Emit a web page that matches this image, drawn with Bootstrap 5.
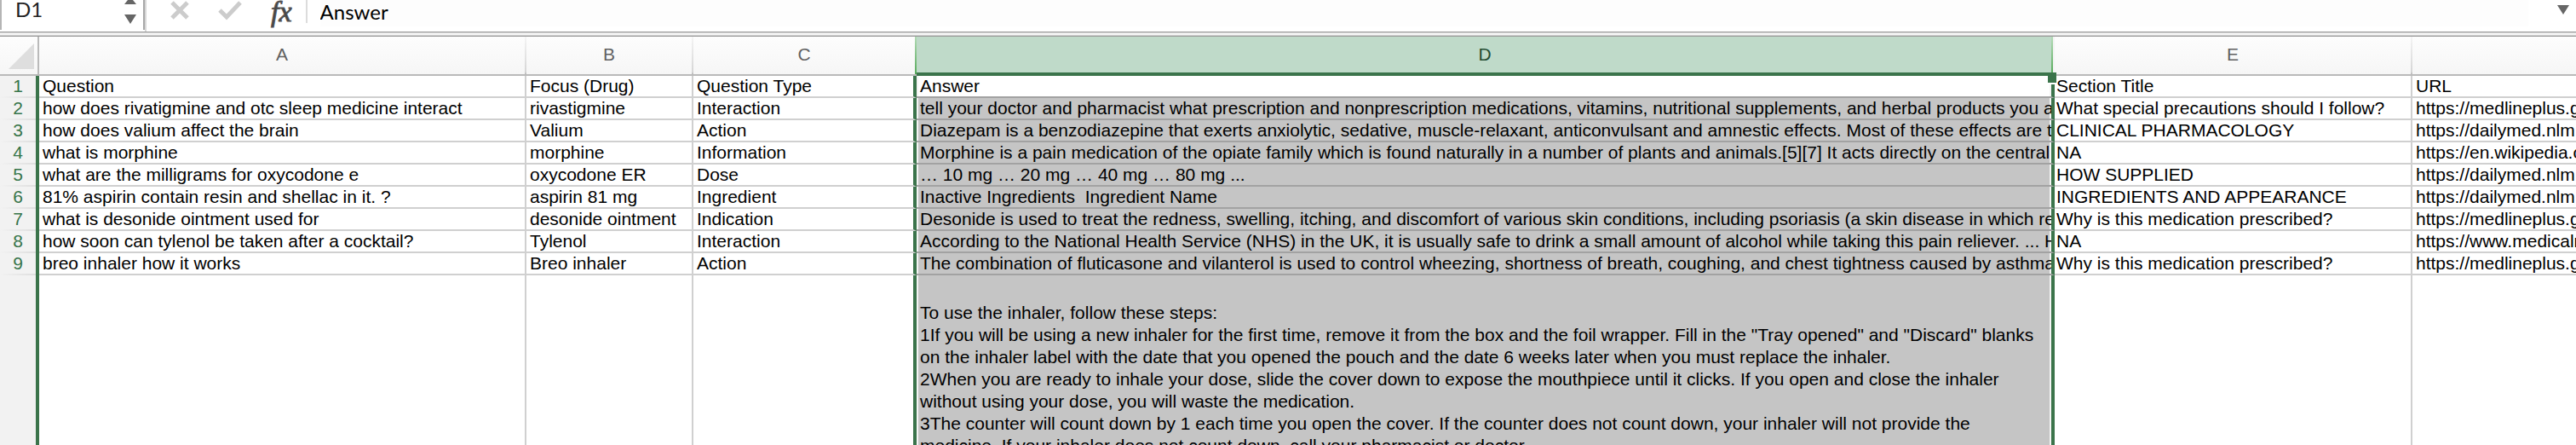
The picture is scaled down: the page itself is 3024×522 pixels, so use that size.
<!DOCTYPE html>
<html lang="en">
<head>
<meta charset="utf-8">
<meta name="viewport" content="width=device-width, initial-scale=1">
<title>Drug questions</title>
<link href="https://cdn.jsdelivr.net/npm/bootstrap@5.3.0/dist/css/bootstrap.min.css" rel="stylesheet">
<script src="https://cdn.jsdelivr.net/npm/bootstrap@5.3.0/dist/js/bootstrap.bundle.min.js" defer></script>
<style>
  body { font-family: "Liberation Sans", Arial, sans-serif; font-size: 21px; line-height: 24px; color: #000; background: #fff; overflow: hidden; }
  .formula-bar { height: 37px; font-family: Lato, sans-serif; }
  .formula-bar input, .formula-bar button { border: 0; padding: 0; background: transparent; color: #000; }
  .formula-bar input { font-size: 24px; outline: 0; }
  .formula-bar svg { display: block; }
  .formula-bar .name-box { width: 170px; height: 35px; border-left: 2px solid #b5b5b5; border-right: 2px solid #a8a8a8; padding-right: 8px; }
  .formula-bar .name-box input { width: 100px; height: 20px; line-height: 20px; padding-left: 16px; color: #222; }
  .bar-edge { width: 2px; background: #d8d8d8; }
  .tools { padding-left: 28px; gap: 34px; }
  .formula-bar .fx-sign { font: italic 34px/27px "Liberation Serif", serif; color: #444; height: 27px; -webkit-text-stroke: 1px #555; }
  .bar-rule { width: 2px; height: 27px; background: #dcdcdc; margin-left: 16px; }
  .formula-bar .entry { height: 31px; padding: 0 0 5px 0; margin-left: 15px; line-height: 26px; background: #fdfdfd; min-width: 0; }
  .formula-bar .expand { padding: 6px 8px 0 34px; }
  .splitter { height: 6px; border-top: 1px solid #999; border-bottom: 1px solid #999; background: linear-gradient(#d8d8d8 1px, #f6f6f6 1px, #f6f6f6 3px, #d0d0d0 3px); }
  .sheet { table-layout: fixed; width: 100%; border-collapse: separate; border-spacing: 0; }
  .sheet col.c-num { width: 46px; } .sheet col.c-a { width: 572px; } .sheet col.c-b { width: 196px; }
  .sheet col.c-c { width: 262px; } .sheet col.c-d { width: 1336px; } .sheet col.c-e { width: 420px; }
  .sheet th, .sheet td { padding: 0 0 0 4px; border: 0 solid #d0d0d0; border-width: 0 2px 2px 0; height: 26px; overflow: hidden; white-space: pre; vertical-align: top; font-weight: 400; }
  .sheet thead th { height: 44px; padding: 0; line-height: 42px; color: #616161; text-align: center; background: linear-gradient(#fdfdfd, #f6f6f6); border-image: linear-gradient(#f6f6f6, #d6d6d6 90%, #bababa 96%) 2; }
  .sheet thead th.corner { border-image: none; border-color: #bababa; }
  .sheet thead th.corner svg { display: block; margin: 8px 0 0 10px; }
  .sheet thead th.before { border-image: linear-gradient(#b5dcb8, #58ab5c 95%, #bababa 96%) 2; }
  .sheet thead th.picked { background: #bfdac9 linear-gradient(#b5dcb8, #58ab5c) right / 2px 100% no-repeat; color: #254d33; border-image: none; border-right: 2px solid #f4f4f4; border-bottom: 4px solid #3b744b; }
  .sheet tbody th { padding: 0; text-align: center; color: #37754a; background: linear-gradient(90deg, #f2f2f2, #dedede) bottom / 100% 2px no-repeat, #f2f2f2; border-right: 4px solid #3b744b; border-bottom: 0; }
  .sheet tbody td:nth-child(4) { border-right: 4px solid #3b744b; }
  .sheet tbody td:nth-child(5) { background: #c5c5c5; border-bottom-color: #a2a2a2; border-right: 4px solid #3b744b; box-shadow: inset 2px 0 #f4f4f4, inset -2px 0 #f4f4f4; }
  .sheet tbody tr:first-child td:nth-child(5) { background: #fff; }
  .sheet tbody td:nth-child(6) { padding-left: 2px; }
  .sheet tbody .tall > * { padding-top: 31px; line-height: 26px; }
  .sheet tr > :last-child { border-right-width: 0; }
  .handle-cell { position: relative; }
  .sheet tbody td.handle-cell { overflow: visible; }
  .fill-handle { position: absolute; right: -6px; top: -4px; width: 10px; height: 14px; background: #3b744b; border-bottom: 2px solid #fff; z-index: 1; }
</style>
</head>
<body>
<div class="formula-bar d-flex align-items-start">
  <div class="name-box d-flex align-items-start justify-content-between flex-shrink-0">
    <input aria-label="Cell name" value="D1">
    <button aria-label="Choose a cell"><svg width="14" height="29" viewBox="0 0 14 29"><path d="M0 5L4 0H10L14 5ZM0 17H14L7 28Z" fill="#666"/></svg></button>
  </div>
  <div class="bar-edge align-self-stretch"></div>
  <div class="tools d-flex align-items-start flex-shrink-0">
    <button aria-label="Cancel"><svg width="22" height="25" viewBox="0 0 22 25"><path d="M2 3L20 21M20 3L2 21" stroke="#ccc" stroke-width="5"/></svg></button>
    <button aria-label="Enter"><svg width="28" height="25" viewBox="0 0 28 25"><path d="M2 12L10 20L26 3" fill="none" stroke="#ccc" stroke-width="5"/></svg></button>
    <button class="fx-sign" aria-label="Insert function">fx</button>
  </div>
  <div class="bar-rule"></div>
  <input class="entry flex-grow-1" aria-label="Formula" value="Answer">
  <button class="expand" aria-label="Expand formula bar"><svg width="14" height="12" viewBox="0 0 14 12"><path d="M0 0H14L7 11Z" fill="#666"/></svg></button>
</div>
<div class="splitter"></div>
<table class="sheet">
<colgroup><col class="c-num"><col class="c-a"><col class="c-b"><col class="c-c"><col class="c-d"><col class="c-e"><col></colgroup>
<thead>
<tr><th class="corner"><svg width="30" height="30" viewBox="0 0 30 30"><path d="M30 0V30H0Z" fill="#dedede"/></svg></th><th>A</th><th>B</th><th class="before">C</th><th class="picked">D</th><th>E</th><th></th></tr>
</thead>
<tbody>
<tr><th>1</th><td>Question</td><td>Focus (Drug)</td><td>Question Type</td><td class="handle-cell">Answer<span class="fill-handle"></span></td><td>Section Title</td><td>URL</td></tr>
<tr><th>2</th><td>how does rivatigmine and otc sleep medicine interact</td><td>rivastigmine</td><td>Interaction</td><td>tell your doctor and pharmacist what prescription and nonprescription medications, vitamins, nutritional supplements, and herbal products you ar</td><td>What special precautions should I follow?</td><td>https://medlineplus.g</td></tr>
<tr><th>3</th><td>how does valium affect the brain</td><td>Valium</td><td>Action</td><td>Diazepam is a benzodiazepine that exerts anxiolytic, sedative, muscle-relaxant, anticonvulsant and amnestic effects. Most of these effects are th</td><td>CLINICAL PHARMACOLOGY</td><td>https://dailymed.nlm.</td></tr>
<tr><th>4</th><td>what is morphine</td><td>morphine</td><td>Information</td><td>Morphine is a pain medication of the opiate family which is found naturally in a number of plants and animals.[5][7] It acts directly on the central</td><td>NA</td><td>https://en.wikipedia.o</td></tr>
<tr><th>5</th><td>what are the milligrams for oxycodone e</td><td>oxycodone ER</td><td>Dose</td><td>… 10 mg … 20 mg … 40 mg … 80 mg ...</td><td>HOW SUPPLIED</td><td>https://dailymed.nlm.</td></tr>
<tr><th>6</th><td>81% aspirin contain resin and shellac in it. ?</td><td>aspirin 81 mg</td><td>Ingredient</td><td>Inactive Ingredients  Ingredient Name</td><td>INGREDIENTS AND APPEARANCE</td><td>https://dailymed.nlm.</td></tr>
<tr><th>7</th><td>what is desonide ointment used for</td><td>desonide ointment</td><td>Indication</td><td>Desonide is used to treat the redness, swelling, itching, and discomfort of various skin conditions, including psoriasis (a skin disease in which red</td><td>Why is this medication prescribed?</td><td>https://medlineplus.g</td></tr>
<tr><th>8</th><td>how soon can tylenol be taken after a cocktail?</td><td>Tylenol</td><td>Interaction</td><td>According to the National Health Service (NHS) in the UK, it is usually safe to drink a small amount of alcohol while taking this pain reliever. ... Ho</td><td>NA</td><td>https://www.medicaln</td></tr>
<tr><th>9</th><td>breo inhaler how it works</td><td>Breo inhaler</td><td>Action</td><td>The combination of fluticasone and vilanterol is used to control wheezing, shortness of breath, coughing, and chest tightness caused by asthma</td><td>Why is this medication prescribed?</td><td>https://medlineplus.g</td></tr>
<tr class="tall"><th></th><td></td><td></td><td></td><td>To use the inhaler, follow these steps:
1If you will be using a new inhaler for the first time, remove it from the box and the foil wrapper. Fill in the "Tray opened" and "Discard" blanks
on the inhaler label with the date that you opened the pouch and the date 6 weeks later when you must replace the inhaler.
2When you are ready to inhale your dose, slide the cover down to expose the mouthpiece until it clicks. If you open and close the inhaler
without using your dose, you will waste the medication.
3The counter will count down by 1 each time you open the cover. If the counter does not count down, your inhaler will not provide the
medicine. If your inhaler does not count down, call your pharmacist or doctor.</td><td></td><td></td></tr>
</tbody>
</table>
</body>
</html>
